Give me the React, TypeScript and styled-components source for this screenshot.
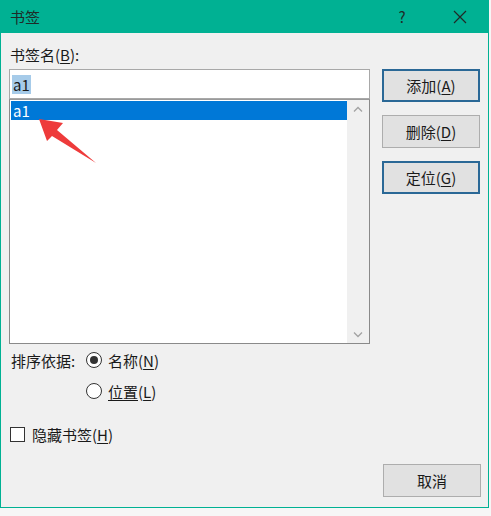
import React from "react";
import styled, { createGlobalStyle } from "styled-components";

const Global = createGlobalStyle`
  html, body { margin: 0; padding: 0; background: #f6f6f6; }
  body { font-family: "Noto Sans CJK SC", "Noto Sans", sans-serif; color: #1a1a1a; }
  #root { width: 491px; height: 516px; overflow: hidden; }
`;

const Window = styled.div`
  position: relative;
  width: 489px;
  height: 508px;
  box-sizing: border-box;
  border: 1px solid #00b193;
  border-top: none;
  background: #f0f0f0;
  display: flex;
  flex-direction: column;
`;

const TitleBar = styled.div`
  height: 33px;
  margin: 0 -1px;
  background: #00b193;
  display: flex;
  align-items: center;
  padding: 0 0 0 10px;
  font-size: 15px;
  color: #1f2a27;
`;

const Title = styled.div`
  flex: 1;
`;

const TitleBtn = styled.div<{ $w: number; $mr?: number }>`
  width: ${(p) => p.$w}px;
  margin-right: ${(p) => p.$mr ?? 0}px;
  height: 33px;
  display: flex;
  align-items: center;
  justify-content: center;
  font-size: 15px;
  color: #1f2a27;
`;

const Main = styled.div`
  display: flex;
  gap: 12px;
  padding: 0 0 0 8px;
`;

const LeftCol = styled.div`
  width: 361px;
  display: flex;
  flex-direction: column;
`;

const Label = styled.div`
  margin-top: 12px;
  height: 20px;
  line-height: 20px;
  font-size: 15px;
  padding-left: 1px;
`;

const U = styled.span`
  text-decoration: underline;
  text-underline-offset: 2px;
`;

const Input = styled.div`
  margin-top: 4px;
  height: 30px;
  box-sizing: border-box;
  border: 1px solid #a8a8a8;
  background: #fff;
  display: flex;
  align-items: center;
  padding-left: 2px;
  font-size: 15px;
`;

const Selected = styled.span`
  background: #a6cbe9;
  color: #1a1a1a;
  line-height: 19px;
  padding: 0 1px;
`;

const ListBox = styled.div`
  height: 245px;
  box-sizing: border-box;
  border: 1px solid #8a8a8a;
  border-top-color: #9a9a9a;
  background: #fff;
  display: flex;
`;

const ListItems = styled.div`
  flex: 1;
  padding: 1px 0 0 1px;
`;

const ListItem = styled.div<{ $sel?: boolean }>`
  height: 19px;
  line-height: 19px;
  padding-left: 2px;
  font-size: 15px;
  background: ${(p) => (p.$sel ? "#0078d7" : "transparent")};
  color: ${(p) => (p.$sel ? "#fff" : "#1a1a1a")};
`;

const ScrollBar = styled.div`
  width: 22px;
  background: #f0f0f0;
  display: flex;
  flex-direction: column;
  justify-content: space-between;
  align-items: center;
  padding: 6px 0 5px;
`;

const RightCol = styled.div`
  width: 98px;
  padding-top: 36px;
  display: flex;
  flex-direction: column;
  gap: 13px;
`;

const Button = styled.div<{ $default?: boolean }>`
  height: 33px;
  box-sizing: border-box;
  border: ${(p) => (p.$default ? "2px solid #2a6896" : "1px solid #adadad")};
  background: #e1e1e1;
  display: flex;
  align-items: center;
  justify-content: center;
  font-size: 15px;
  color: #1a1a1a;
`;

const SortBlock = styled.div`
  padding-left: 10px;
  margin-top: 5px;
  display: flex;
  flex-direction: column;
  gap: 9px;
`;

const OptRow = styled.div<{ $indent?: number }>`
  height: 22px;
  display: flex;
  align-items: center;
  padding-left: ${(p) => p.$indent ?? 0}px;
  font-size: 15px;
`;

const SortLabel = styled.div`
  width: 75px;
`;

const Radio = styled.div<{ $on?: boolean }>`
  width: 16px;
  height: 16px;
  box-sizing: border-box;
  border: 1px solid #333;
  border-radius: 50%;
  background: #fff;
  display: flex;
  align-items: center;
  justify-content: center;
  margin-right: 6px;
  &::after {
    content: "";
    display: ${(p) => (p.$on ? "block" : "none")};
    width: 8px;
    height: 8px;
    border-radius: 50%;
    background: #333;
  }
`;

const CheckRow = styled.div`
  margin-top: 21px;
  padding-left: 9px;
  height: 22px;
  display: flex;
  align-items: center;
  font-size: 15px;
`;

const CheckBox = styled.div`
  width: 15px;
  height: 15px;
  box-sizing: border-box;
  border: 1px solid #333;
  background: #fff;
  margin-right: 7px;
`;

const Footer = styled.div`
  margin-top: 19px;
  display: flex;
  justify-content: flex-end;
  padding-right: 7px;
`;

const FooterBtn = styled(Button)`
  width: 98px;
`;

const ArrowLayer = styled.svg`
  position: absolute;
  left: 0;
  top: 0;
  pointer-events: none;
`;

const Chevron = ({ up }: { up?: boolean }) => (
  <svg width="10" height="6" viewBox="0 0 10 6">
    <path
      d={up ? "M1 5.5 L5 1.5 L9 5.5" : "M1 0.5 L5 4.5 L9 0.5"}
      fill="none"
      stroke="#a3a3a3"
      strokeWidth="1.3"
    />
  </svg>
);

export default function App() {
  return (
    <>
      <Global />
      <Window>
        <TitleBar>
          <Title>书签</Title>
          <TitleBtn $w={40} $mr={9}>?</TitleBtn>
          <TitleBtn $w={58}>
            <svg width="14" height="14" viewBox="0 0 14 14">
              <path d="M1 1 L13 13 M13 1 L1 13" stroke="#1f2a27" strokeWidth="1.2" />
            </svg>
          </TitleBtn>
        </TitleBar>
        <Main>
          <LeftCol>
            <Label>
              书签名(<U>B</U>):
            </Label>
            <Input>
              <Selected>a1</Selected>
            </Input>
            <ListBox>
              <ListItems>
                <ListItem $sel>a1</ListItem>
              </ListItems>
              <ScrollBar>
                <Chevron up />
                <Chevron />
              </ScrollBar>
            </ListBox>
          </LeftCol>
          <RightCol>
            <Button $default>
              添加(<U>A</U>)
            </Button>
            <Button>
              删除(<U>D</U>)
            </Button>
            <Button $default>
              定位(<U>G</U>)
            </Button>
          </RightCol>
        </Main>
        <SortBlock>
          <OptRow>
            <SortLabel>排序依据:</SortLabel>
            <Radio $on />
            <span>
              名称(<U>N</U>)
            </span>
          </OptRow>
          <OptRow $indent={75}>
            <Radio />
            <span>
              <U>位置</U>(<U>L</U>)
            </span>
          </OptRow>
        </SortBlock>
        <CheckRow>
          <CheckBox />
          <span>
            隐藏书签(<U>H</U>)
          </span>
        </CheckRow>
        <Footer>
          <FooterBtn>取消</FooterBtn>
        </Footer>
        <ArrowLayer width="489" height="508" viewBox="0 0 489 508">
          <polygon
            points="38,119 62,123 56,130 95,163 51,136 46,141"
            fill="#ee3b3b"
          />
        </ArrowLayer>
      </Window>
    </>
  );
}
